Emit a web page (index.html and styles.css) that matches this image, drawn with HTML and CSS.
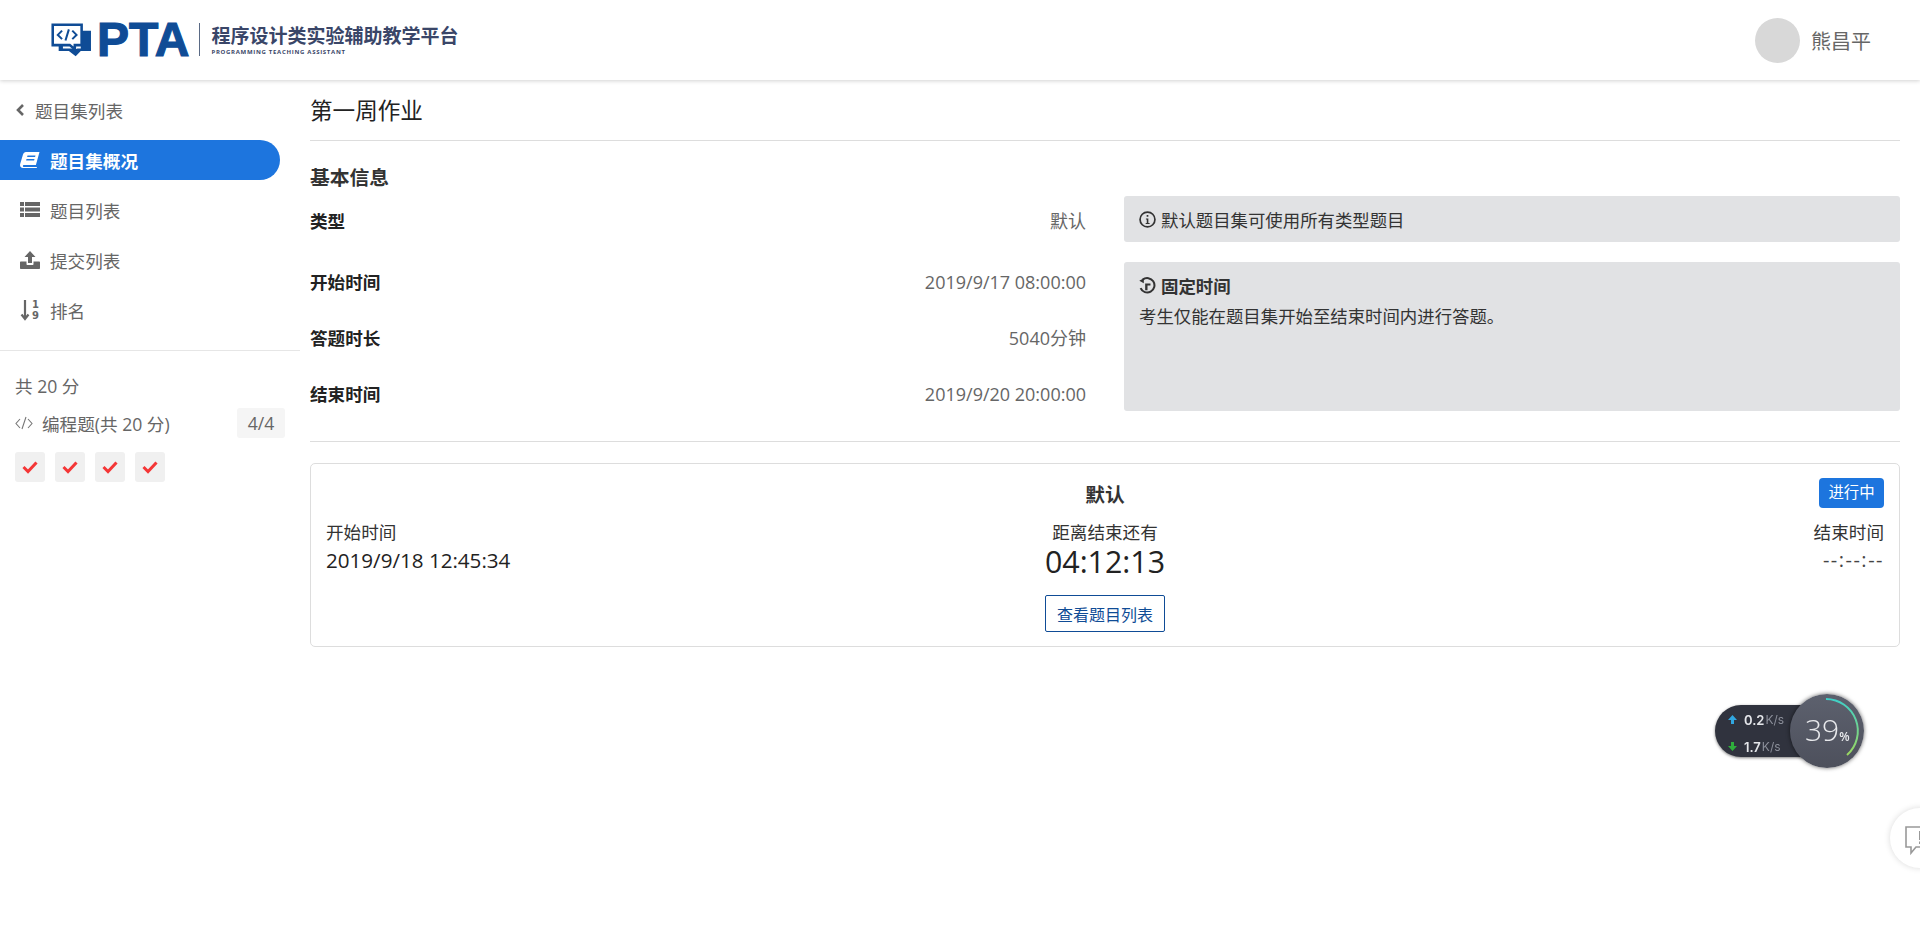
FILE: index.html
```html
<!DOCTYPE html>
<html lang="zh-CN">
<head>
  <meta charset="UTF-8" />
  <title>第一周作业</title>
  <link rel="stylesheet" href="styles.css">
</head>
<body>

  <header class="topbar">
    <div class="logo">
      <svg class="logo-icon" width="40" height="34" viewBox="0 0 47 40">
        <path d="M9 12h5v18h13l2 1 2-1h4V9h12v24H35l-6 6-8-6H9z" fill="#0f4c96"/>
        <path d="M2 2h34v24H28v5l-6-5H2z" fill="#fff" stroke="#0f4c96" stroke-width="3"/>
        <path d="M13 9l-5 5 5 5M25 9l5 5-5 5M21 7.500l-4 13" fill="none" stroke="#0f4c96" stroke-width="2.400"/>
      </svg>
      <span class="logo-pta">PTA</span>
      <span class="logo-line"></span>
      <div class="logo-text">
        <div class="logo-cn">程序设计类实验辅助教学平台</div>
        <div class="logo-en">PROGRAMMING TEACHING ASSISTANT</div>
      </div>
    </div>
    <div class="user">
      <span class="avatar"></span>
      <span class="user-name">熊昌平</span>
    </div>
  </header>

  <div class="page">
    <aside class="sidebar">
      <a class="back-link">
        <svg width="10" height="14" viewBox="0 0 10 14"><path d="M8 2L3 7l5 5" fill="none" stroke="#666" stroke-width="2.600"/></svg>
        题目集列表
      </a>
      <nav class="menu">
        <a class="menu-item active">
          <svg width="20" height="16" viewBox="0 0 20 16"><path d="M6 0h13.500l-3.600 13H4c-1.500 0-1.500 2 0 2h13l-.3 1H3C.5 16-.5 14 .3 11.500L3 2.500C3.500 1 4.500 0 6 0zm1.500 3.500l-.4 1.500h8l.4-1.500zm-1 3.500l-.4 1.500h8l.4-1.500z" fill="#fff" fill-rule="evenodd"/></svg>
          题目集概况
        </a>
        <a class="menu-item">
          <svg width="20" height="16" viewBox="0 0 20 16"><path d="M0 0h4v4H0zM5 0h15v4H5zM0 5.500h4v4H0zM5 5.500h15v4H5zM0 11h4v4H0zM5 11h15v4H5z" fill="#666"/></svg>
          题目列表
        </a>
        <a class="menu-item">
          <svg width="20" height="19" viewBox="0 0 20 19"><path d="M10 0l5.500 6H12v6H8V6H4.500zM1 10.500h5.500V13c0 .6.400 1 1 1h5c.6 0 1-.4 1-1v-2.500H19c.6 0 1 .4 1 1V17c0 .6-.4 1-1 1H1c-.6 0-1-.4-1-1v-5.500c0-.6.400-1 1-1z" fill="#666"/></svg>
          提交列表
        </a>
        <a class="menu-item">
          <svg width="20" height="22" viewBox="0 0 20 22"><path d="M5 1v18M1.500 15.500L5 20l3.500-4.500" fill="none" stroke="#666" stroke-width="2.200"/><text x="12" y="9" class="sort-num">1</text><text x="12" y="20" class="sort-num">9</text></svg>
          排名
        </a>
      </nav>
      <div class="score">
        <div class="score-total">共 20 分</div>
        <div class="score-row">
          <svg width="18" height="14" viewBox="0 0 18 14"><path d="M5 3L1 7.500 5 12M13 3l4 4.500-4 4.500M11 1L7 13" fill="none" stroke="#777" stroke-width="1.100"/></svg>
          <span class="score-name">编程题(共 20 分)</span>
          <span class="score-count">4/4</span>
        </div>
        <div class="checks">
          <span class="check"><svg width="16" height="13" viewBox="0 0 16 13"><path d="M1.500 6l4.500 4.500 8.500-9" fill="none" stroke="#f43636" stroke-width="3"/></svg></span>
          <span class="check"><svg width="16" height="13" viewBox="0 0 16 13"><path d="M1.500 6l4.500 4.500 8.500-9" fill="none" stroke="#f43636" stroke-width="3"/></svg></span>
          <span class="check"><svg width="16" height="13" viewBox="0 0 16 13"><path d="M1.500 6l4.500 4.500 8.500-9" fill="none" stroke="#f43636" stroke-width="3"/></svg></span>
          <span class="check"><svg width="16" height="13" viewBox="0 0 16 13"><path d="M1.500 6l4.500 4.500 8.500-9" fill="none" stroke="#f43636" stroke-width="3"/></svg></span>
        </div>
      </div>
    </aside>

    <main class="main">
      <h1 class="title">第一周作业</h1>
      <h2 class="section-title">基本信息</h2>

      <div class="info-grid">
        <div class="info-row info-type">
          <span class="label">类型</span>
          <span class="value">默认</span>
        </div>
        <div class="alert">
          <svg width="17" height="17" viewBox="0 0 16 16"><circle cx="8" cy="8" r="7" fill="none" stroke="#333" stroke-width="1.600"/><path d="M6.500 7h2.300v4.200H10v1H6.300v-1h1V8H6.500zM7.200 3.700h1.600v1.800H7.200z" fill="#333"/></svg>
          默认题目集可使用所有类型题目
        </div>
        <div class="info-times">
          <div class="info-row"><span class="label">开始时间</span><span class="value">2019/9/17 08:00:00</span></div>
          <div class="info-row"><span class="label">答题时长</span><span class="value">5040分钟</span></div>
          <div class="info-row"><span class="label">结束时间</span><span class="value">2019/9/20 20:00:00</span></div>
        </div>
        <div class="alert alert-big">
          <div class="alert-head">
            <svg width="17" height="17" viewBox="0 0 16 16"><path d="M3.500 2.500A6.800 6.800 0 1 1 1.500 10.500" fill="none" stroke="#333" stroke-width="1.900"/><path d="M.3 3.500l4.200-2.300v4.600z" fill="#333"/><path d="M5.800 12.500V6h5v2H8v4.500z" fill="#333"/></svg>
            <b>固定时间</b>
          </div>
          <p class="alert-text">考生仅能在题目集开始至结束时间内进行答题。</p>
        </div>
      </div>

      <section class="card">
        <div class="card-head">
          <span></span>
          <b class="card-title">默认</b>
          <span class="card-status"><span class="status-badge">进行中</span></span>
        </div>
        <div class="card-body">
          <div class="card-col">
            <div class="card-label">开始时间</div>
            <div class="card-date">2019/9/18 12:45:34</div>
          </div>
          <div class="card-col card-mid">
            <div class="card-label">距离结束还有</div>
            <div class="countdown">04:12:13</div>
            <button class="list-btn">查看题目列表</button>
          </div>
          <div class="card-col card-end">
            <div class="card-label">结束时间</div>
            <div class="card-dash">--:--:--</div>
          </div>
        </div>
      </section>
    </main>
  </div>

  <div class="speed">
    <div class="speed-pill">
      <div class="speed-row">
        <svg width="9" height="9" viewBox="0 0 9 9"><path d="M4.500 0L9 5H6v4H3V5H0z" fill="#31a7e0"/></svg>
        <b>0.2</b><span>K/s</span>
      </div>
      <div class="speed-row">
        <svg width="9" height="9" viewBox="0 0 9 9"><path d="M4.500 9L0 4h3V0h3v4h3z" fill="#2fae3c"/></svg>
        <b>1.7</b><span>K/s</span>
      </div>
    </div>
    <div class="speed-dial">
      <svg width="74" height="74" viewBox="0 0 74 74">
        <defs>
          <linearGradient id="ring" x1="0" y1="0" x2="0" y2="1">
            <stop offset="0" stop-color="#3fd0c8"/>
            <stop offset="1" stop-color="#9bd860"/>
          </linearGradient>
        </defs>
        <path d="M36 5A32 32 0 0 1 57 61" fill="none" stroke="url(#ring)" stroke-width="2"/>
      </svg>
      <span class="dial-num">39<small>%</small></span>
    </div>
  </div>

  <div class="feedback">
    <svg width="28" height="30" viewBox="0 0 28 30"><path d="M1 1h26v20H11l-5 6v-6H1z" fill="none" stroke="#999" stroke-width="1.600"/><path d="M14 5h3v9h-3zM14 15.500h3V18h-3z" fill="#999"/></svg>
  </div>

</body>
</html>
```

FILE: styles.css
```css
* {
  box-sizing: border-box;
}

body {
  margin: 0;
  background: #fff;
  color: #333;
  font-family: "Open Sans", "Noto Sans CJK SC", sans-serif;
  font-size: 17.6px;
  overflow: hidden;
  height: 939px;
}

.topbar {
  height: 80px;
  display: flex;
  align-items: center;
  justify-content: space-between;
  padding: 0 49px 0 51px;
  box-shadow: 0 1px 4px rgba(0, 0, 0, 0.18);
}

.logo {
  display: flex;
  align-items: center;
  height: 36px;
  margin-top: -1px;
}

.logo-pta {
  margin-left: 6px;
  font-family: "Liberation Sans", sans-serif;
  font-size: 48px;
  font-weight: bold;
  line-height: 36px;
  color: #0f4c96;
  -webkit-text-stroke: 1.2px #0f4c96;
}

.logo-line {
  width: 1px;
  height: 33px;
  margin: 0 11px 0 10px;
  background: #5a6a85;
}

.logo-cn {
  font-size: 19px;
  font-weight: bold;
  line-height: 24px;
  color: #3a4668;
  white-space: nowrap;
}

.logo-en {
  font-size: 6px;
  font-weight: bold;
  line-height: 8px;
  letter-spacing: 0.7px;
  color: #3a4668;
}

.user {
  display: flex;
  align-items: center;
  gap: 11px;
}

.avatar {
  width: 45px;
  height: 45px;
  border-radius: 50%;
  background: #d8d8d8;
}

.user-name {
  color: #666;
  font-size: 20px;
}

.page {
  display: flex;
}

.sidebar {
  width: 300px;
  flex-shrink: 0;
  color: #666;
}

.back-link {
  display: flex;
  align-items: center;
  gap: 10px;
  height: 40px;
  margin-top: 10px;
  padding-left: 15px;
}

.menu {
  display: flex;
  flex-direction: column;
  gap: 10px;
  padding: 10px 0 20px;
  border-bottom: 1px solid #e6e6e6;
}

.menu-item {
  display: flex;
  align-items: center;
  gap: 10px;
  width: 280px;
  height: 40px;
  padding-left: 20px;
}

.menu-item.active {
  background: #1d75de;
  color: #fff;
  font-weight: bold;
  border-radius: 0 20px 20px 0;
}

.sort-num {
  font-family: "DejaVu Sans", sans-serif;
  font-size: 10px;
  font-weight: bold;
  fill: #666;
}

.score {
  padding: 23px 15px 0;
}

.score-total {
  line-height: 24px;
  height: 34px;
}

.score-row {
  display: flex;
  align-items: center;
  gap: 9px;
  height: 30px;
}

.score-count {
  margin-left: auto;
  width: 48px;
  height: 30px;
  line-height: 30px;
  text-align: center;
  background: #f5f5f5;
  border-radius: 3px;
}

.checks {
  display: flex;
  gap: 10px;
  margin-top: 14px;
}

.check {
  width: 30px;
  height: 30px;
  display: flex;
  align-items: center;
  justify-content: center;
  background: #f0f0f0;
  border-radius: 3px;
}

.main {
  flex: 1;
  padding: 0 20px 0 10px;
}

.title {
  margin: 0;
  height: 61px;
  line-height: 62px;
  font-size: 22.6px;
  font-weight: normal;
  color: #222;
  border-bottom: 1px solid #ddd;
}

.section-title {
  margin: 23px 0 4px;
  height: 28px;
  line-height: 28px;
  font-size: 19.8px;
  font-weight: bold;
}

.info-grid {
  display: grid;
  grid-template-columns: 776px 776px;
  column-gap: 38px;
  row-gap: 20px;
  padding-bottom: 30px;
  border-bottom: 1px solid #ddd;
}

.info-row {
  display: flex;
  justify-content: space-between;
  align-items: center;
  line-height: 24px;
}

.info-type {
  height: 46px;
  align-items: flex-start;
  padding-top: 13px;
}

.info-times {
  display: flex;
  flex-direction: column;
  gap: 32px;
  padding-top: 8px;
}

.label {
  font-weight: bold;
  color: #222;
}

.value {
  font-size: 18px;
  color: #666;
}

.alert {
  display: flex;
  align-items: center;
  gap: 5px;
  height: 46px;
  padding: 0 15px;
  font-size: 17.4px;
  background: #e1e2e4;
  border-radius: 3px;
}

.alert-big {
  display: block;
  height: 149px;
  padding-top: 11px;
}

.alert-head {
  display: flex;
  align-items: center;
  gap: 5px;
  height: 24px;
}

.alert-text {
  margin: 7px 0 0;
  line-height: 24px;
}

.card {
  margin-top: 21px;
  height: 184px;
  padding: 14px 15px;
  border: 1px solid #ddd;
  border-radius: 5px;
}

.card-head {
  display: grid;
  grid-template-columns: 1fr auto 1fr;
  align-items: center;
  height: 30px;
}

.card-title {
  font-size: 19.8px;
}

.card-status {
  text-align: right;
}

.status-badge {
  display: inline-block;
  width: 65px;
  height: 30px;
  line-height: 30px;
  text-align: center;
  font-size: 15.4px;
  color: #fff;
  background: #1d75de;
  border-radius: 4px;
}

.card-body {
  display: grid;
  grid-template-columns: 1fr auto 1fr;
  margin-top: 11px;
}

.card-label {
  line-height: 26px;
}

.card-date {
  font-size: 20.6px;
  line-height: 30px;
  color: #222;
}

.card-mid {
  display: flex;
  flex-direction: column;
  align-items: center;
}

.countdown {
  font-size: 30.4px;
  line-height: 34px;
  color: #222;
}

.list-btn {
  margin-top: 16px;
  width: 120px;
  height: 37px;
  padding: 0;
  font: inherit;
  font-size: 16px;
  color: #0f4c96;
  background: #fff;
  border: 1px solid #0f4c96;
  border-radius: 2px;
}

.card-end {
  text-align: right;
}

.card-dash {
  font-size: 20px;
  line-height: 30px;
  letter-spacing: 1.5px;
  color: #444;
}

/* floating stuff */
.speed {
  position: fixed;
  left: 1715px;
  top: 694px;
  width: 150px;
  height: 74px;
}

.speed-pill {
  position: absolute;
  left: 0;
  top: 11px;
  width: 90px;
  height: 52px;
  padding: 0 0 0 13px;
  background: #30333e;
  border-radius: 26px 0 0 26px;
  box-shadow: 0 1px 3px rgba(0, 0, 0, 0.5);
}

.speed-row {
  display: flex;
  align-items: center;
  height: 27px;
  padding-top: 2px;
  font-family: "Inter", sans-serif;
  font-size: 13px;
  color: #e4e6ea;
}

.speed-row b {
  margin-left: 7px;
  font-weight: 600;
}

.speed-row span {
  margin-left: 1px;
  font-size: 12px;
  color: #8b8f9a;
}

.speed-dial {
  position: absolute;
  left: 75px;
  top: 0;
  width: 74px;
  height: 74px;
  border-radius: 50%;
  background: linear-gradient(#5d616e, #4d505c);
  box-shadow: 0 0 4px rgba(0, 0, 0, 0.6);
}

.speed-dial svg {
  position: absolute;
  left: 0;
  top: 0;
}

.dial-num {
  position: absolute;
  left: 15px;
  top: 16px;
  font-family: "Open Sans", sans-serif;
  font-weight: 300;
  font-size: 30px;
  line-height: 40px;
  color: #e8e9ec;
}

.dial-num small {
  font-size: 12px;
  font-weight: 600;
}

.feedback {
  position: fixed;
  left: 1890px;
  top: 808px;
  width: 60px;
  height: 60px;
  padding: 18px 0 0 15px;
  background: #fff;
  border-radius: 50%;
  box-shadow: 0 0 6px rgba(0, 0, 0, 0.15);
}
```
